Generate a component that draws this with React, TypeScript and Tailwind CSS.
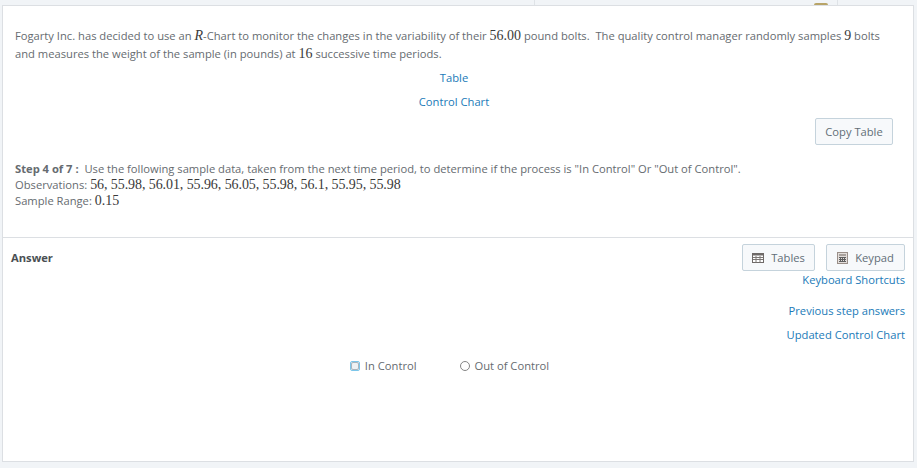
const sans = "font-['Open_Sans',sans-serif]";

function Num({ children, className = "" }: { children: React.ReactNode; className?: string }) {
  return <span className={`font-['Liberation_Serif',serif] text-[14px] leading-none text-[#3a3a3a] ${className}`}>{children}</span>;
}

function TableIcon() {
  return (
    <svg width="12" height="10" viewBox="0 0 12 10" className="flex-shrink-0">
      <rect x="0.5" y="0.5" width="11" height="9" fill="#fff" stroke="#6f6a68" />
      <rect x="0.5" y="0.5" width="11" height="2" fill="#6f6a68" />
      <path d="M1 4.5h10M1 6.5h10M4 3v6.5M8 3v6.5" stroke="#7d7876" strokeWidth="1" fill="none" />
    </svg>
  );
}

function KeypadIcon() {
  return (
    <svg width="11" height="12" viewBox="0 0 11 12" className="flex-shrink-0">
      <rect x="0.5" y="0.5" width="10" height="11" fill="#e3dedb" stroke="#9a8f88" />
      <rect x="2" y="2" width="7" height="2" fill="#a8a19c" />
      <path d="M2 5.5h7M2 7.5h7M2 9.5h7M3.5 5v5M5.5 5v5M7.5 5v5" stroke="#5f5f5f" strokeWidth="1" fill="none" />
    </svg>
  );
}

function Btn({ children, className = "" }: { children: React.ReactNode; className?: string }) {
  return (
    <button className={`h-[27px] pt-px flex items-center justify-center rounded-[2px] border border-[#c5d3dc] bg-[#f7f9fb] text-[#626e77] text-[11.2px] ${className}`}>
      {children}
    </button>
  );
}

function Radio({ label, focused }: { label: string; focused?: boolean }) {
  return (
    <label className="flex items-center gap-[5px]">
      {focused ? (
        <span className="w-[10px] h-[10px] rounded-[2px] border border-[#7cc6ea] bg-[#eef1f3] flex items-center justify-center">
          <span className="w-[8px] h-[8px] rounded-[2px] border border-[#a9b4bb]" />
        </span>
      ) : (
        <span className="w-[10px] h-[10px] rounded-full border border-[#858585] bg-white" />
      )}
      <span>{label}</span>
    </label>
  );
}

export default function App() {
  return (
    <div className={`${sans} w-[917px] h-[468px] overflow-hidden bg-[#f1f4f7] text-[11.2px] text-[#666b70] flex flex-col`}>
      {/* top strip */}
      <div className="h-[5px] flex pl-[534px] flex-shrink-0">
        <div className="w-px bg-[#dfe3e7]" />
        <div className="w-[270px]" />
        <div className="w-[32px] flex justify-center items-end">
          <div className="w-[14px] h-[2px] rounded-t-full bg-[#b8a468]" />
        </div>
        <div className="w-px bg-[#dfe3e7]" />
      </div>

      {/* card */}
      <div className="ml-[2px] mr-[3px] h-[457px] border border-[#dcdfe3] bg-white flex flex-col">
        <div className="pt-[21px] pl-[12px] pr-[20px] h-[232px] border-b border-[#dcdfe3] flex flex-col">
          <p className="leading-[18px]">
            Fogarty Inc. has decided to use an <Num><i>R</i></Num>-Chart to monitor the changes in the variability of their <Num>56.00</Num> pound bolts.&nbsp; The quality control manager randomly samples <Num>9</Num> bolts<br />and measures the weight of the sample (in pounds) at <Num>16</Num> successive time periods.
          </p>
          <a className="mt-[3px] text-center leading-[24px] text-[#1a7ab8]">Table</a>
          <a className="text-center leading-[24px] text-[#1a7ab8]">Control Chart</a>
          <div className="flex justify-end mt-[4px]">
            <Btn className="w-[78px]">Copy Table</Btn>
          </div>
          <div className="mt-[16px] leading-[16px]">
            <p>
              <b className="font-bold">Step 4 of 7 :</b>&nbsp; Use the following sample data, taken from the next time period, to determine if the process is "In Control" Or "Out of Control".
            </p>
            <p>Observations: <Num className="tracking-[-0.08px]">56, 55.98, 56.01, 55.96, 56.05, 55.98, 56.1, 55.95, 55.98</Num></p>
            <p>Sample Range: <Num>0.15</Num></p>
          </div>
        </div>

        <div className="flex-1 flex flex-col pl-[8px] pr-[8px]">
          <div className="flex items-start justify-between pt-[6px]">
            <b className="font-bold text-[#4a4f53] leading-[27px]">Answer</b>
            <div className="flex gap-[11px]">
              <Btn className="w-[73px] gap-[7px]"><TableIcon />Tables</Btn>
              <Btn className="w-[79px] gap-[7px]"><KeypadIcon />Keypad</Btn>
            </div>
          </div>
          <div className="flex flex-col items-end text-[#1a7ab8]">
            <a className="leading-[16px] mt-[1px]">Keyboard Shortcuts</a>
            <a className="leading-[24px] mt-[11px]">Previous step answers</a>
            <a className="leading-[24px]">Updated Control Chart</a>
          </div>
          <div className="flex justify-center gap-[43px] mt-[11px] pr-[17px]">
            <Radio label="In Control" focused />
            <Radio label="Out of Control" />
          </div>
        </div>
      </div>
    </div>
  );
}
